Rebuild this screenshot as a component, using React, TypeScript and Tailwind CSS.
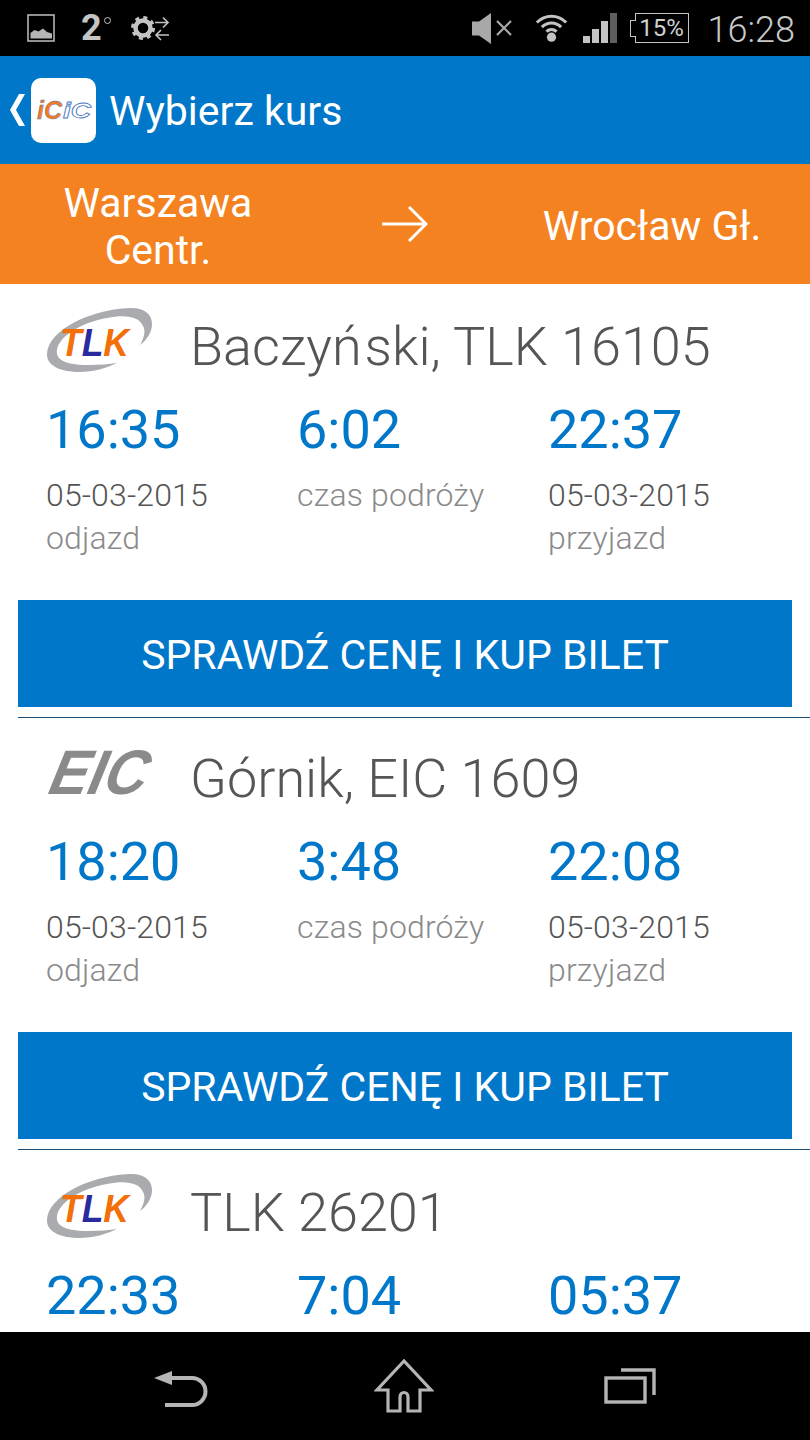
import React from "react";

const StatusLeft = () => (
  <div className="flex items-center">
    <svg width="30" height="30" viewBox="0 0 30 30" className="ml-[26px]">
      <rect x="2" y="2" width="26" height="26" fill="none" stroke="#b5b5b5" strokeWidth="1.6" />
      <path d="M4.500 25.500V20l4-3 4 1.500 4.500-3 4 3.500 5 1.500v5z" fill="#b5b5b5" />
    </svg>
    <span className="ml-[25px] text-[36px] leading-none font-bold text-[#c4c4c4]">2</span>
    <span className="mb-[16px] ml-[2px] h-[7px] w-[7px] rounded-full border border-[#c4c4c4]" />
    <svg width="40" height="30" viewBox="0 0 40 30" className="ml-[20px]">
      <g fill="none" stroke="#c4c4c4">
        <circle cx="12" cy="15" r="7.500" strokeWidth="4.500" />
        <circle cx="12" cy="15" r="10.500" strokeWidth="3" strokeDasharray="4 4.250" />
        <path d="M24 9.500h13M32 4.500l5 5-5 5M38 22H25M30 17l-5 5 5 5" strokeWidth="1.600" />
      </g>
    </svg>
  </div>
);

const StatusRight = () => (
  <div className="flex items-center">
    <svg width="40" height="31" viewBox="0 0 40 31">
      <path d="M0 8.500h7L19 0v31L7 22.500H0z" fill="#a8a8a8" />
      <path d="M25 8l14 14M39 8L25 22" stroke="#a8a8a8" strokeWidth="2.200" />
    </svg>
    <svg width="33" height="30" viewBox="0 0 36 32" className="ml-[23px]">
      <g fill="none" stroke="#c4c4c4" strokeWidth="3.400">
        <path d="M2 10c9-9 23-9 32 0" />
        <path d="M7.500 15c6-6 15-6 21 0" />
        <path d="M12.500 20c3.200-3 7.800-3 11 0" />
      </g>
      <circle cx="18" cy="26" r="5" fill="#c4c4c4" />
    </svg>
    <svg width="34" height="30" viewBox="0 0 34 30" className="ml-[15px]">
      <rect x="0" y="23" width="7" height="7" fill="#c4c4c4" />
      <rect x="9" y="16" width="7" height="14" fill="#c4c4c4" />
      <rect x="18" y="8" width="7" height="22" fill="#c4c4c4" />
      <rect x="27" y="0" width="7" height="30" fill="#5e5e5e" />
    </svg>
    <div className="relative ml-[18px] flex h-[30px] w-[54px] items-center justify-center border border-[#c4c4c4] text-[24px] leading-none text-[#d0d0d0]">
      15%
      <span className="absolute top-[6px] left-[-6px] h-[17px] w-[6px] border-y border-l border-[#c4c4c4] bg-black" />
    </div>
    <span className="mt-[3px] mr-[15px] ml-[19px] text-[36px] leading-none font-light text-[#c8c8c8]">16:28</span>
  </div>
);

const TlkLogo = () => (
  <svg width="108" height="66" viewBox="0 0 108 66" className="mb-[6px] block">
    <path d="M0 46C2 24 40 3 83 1c15-.5 22 7 22 16 0 7-4 15-12 21 4-7 6-14 3-19C92 10 80 7 60 11 32 16 12 30 10 43c-2 12 14 15 32 15 11 0 20-1 28-2-10 5-24 9-37 9C12 65-1 58 0 46z" fill="#a9abae" />
    <text x="13" y="49" fontFamily="'Liberation Sans', sans-serif" fontStyle="italic" fontWeight="700" fontSize="38" textLength="69" lengthAdjust="spacingAndGlyphs">
      <tspan fill="#f26f0a">T</tspan>
      <tspan fill="#2a2aa0">L</tspan>
      <tspan fill="#f26f0a">K</tspan>
    </text>
  </svg>
);

const EicLogo = () => (
  <svg width="108" height="50" viewBox="0 0 108 50" className="mb-[13px] block overflow-visible">
    <g transform="translate(-3 46) skewX(-22)">
      <text x="0" y="0" fill="#8a8a8a" fontFamily="'Liberation Sans', sans-serif" fontWeight="700" fontSize="63" textLength="97" lengthAdjust="spacingAndGlyphs">EIC</text>
    </g>
  </svg>
);

const Cell = ({ time, top, bottom, short }: { time: string; top?: string; bottom: string; short?: boolean }) => (
  <div>
    <div className="text-[54px] leading-[64px] text-[#0077c8]">{time}</div>
    {!short && (
      <div className="mt-[12px] h-[86px] tracking-[0.15px]">
        {top && <div className="text-[32px] leading-[43px] font-[350] text-[#555555]">{top}</div>}
        <div className="text-[32px] leading-[43px] font-[350] text-[#8a8a8a]">{bottom}</div>
      </div>
    )}
  </div>
);

const Card = ({
  logo,
  title,
  dep,
  dur,
  arr,
  last,
}: {
  logo: React.ReactNode;
  title: React.ReactNode;
  dep: string;
  dur: string;
  arr: string;
  last?: boolean;
}) => (
  <section className={last ? "mt-[2px]" : ""}>
    <div className="flex h-[114px] items-end pb-[19px] pl-[47px]">
      <div className="w-[143px]">{logo}</div>
      <h2 className="text-[54px] leading-[64px] font-light whitespace-nowrap text-[#555555]">{title}</h2>
    </div>
    <div className="grid grid-cols-[251px_251px_1fr] pl-[46px]">
      <Cell time={dep} top="05-03-2015" bottom="odjazd" short={last} />
      <Cell time={dur} bottom="czas podróży" short={last} />
      <Cell time={arr} top="05-03-2015" bottom="przyjazd" short={last} />
    </div>
    {!last && (
      <>
        <div className="mx-[18px] mt-[40px] flex h-[107px] items-center justify-center bg-[#0077c8] pt-[4px] text-[41px] text-white">
          SPRAWDŹ CENĘ I KUP BILET
        </div>
        <div className="mt-[10px] mb-[-2px] ml-[18px] h-[1px] bg-[#1d4f7a]" />
      </>
    )}
  </section>
);

export default function App() {
  return (
    <div className="flex h-[1440px] w-[810px] flex-col overflow-hidden bg-white font-['Roboto',sans-serif]">
      <header className="flex h-[56px] shrink-0 items-center justify-between bg-black">
        <StatusLeft />
        <StatusRight />
      </header>
      <div className="flex h-[108px] shrink-0 items-center bg-[#0077c8] text-white">
        <svg width="18" height="32" viewBox="0 0 18 32" className="ml-[8px]">
          <path d="M11 0h6L8 16l9 16h-6L2 16z" fill="#ffffff" />
        </svg>
        <div className="ml-[5px] flex h-[65px] w-[65px] items-center justify-center rounded-[10px] bg-white">
          <svg width="58" height="26" viewBox="0 0 58 26">
            <text x="2" y="22" fill="#f47b20" stroke="#4a78b8" strokeWidth="0.4" fontFamily="'Liberation Sans', sans-serif" fontStyle="italic" fontWeight="700" fontSize="25">iC</text>
            <text x="28" y="21" fill="none" stroke="#4a78b8" strokeWidth="0.8" fontFamily="'Liberation Sans', sans-serif" fontStyle="italic" fontWeight="700" fontSize="22" textLength="28" lengthAdjust="spacingAndGlyphs">iC</text>
          </svg>
        </div>
        <span className="mt-[3px] ml-[13px] text-[41px] leading-none">Wybierz kurs</span>
      </div>
      <div className="grid h-[120px] shrink-0 grid-cols-[316px_178px_1fr] items-center bg-[#f58220] pt-[5px] text-center text-[41px] leading-[47px] text-white">
        <div>
          Warszawa
          <br />
          Centr.
        </div>
        <svg width="46" height="36" viewBox="0 0 46 36" className="mb-[5px] justify-self-center">
          <path d="M0 18h44M27 1l17 17-17 17" fill="none" stroke="#ffffff" strokeWidth="3" />
        </svg>
        <div>Wrocław Gł.</div>
      </div>
      <main className="min-h-0 flex-1 overflow-hidden">
        <Card
          logo={<TlkLogo />}
          title={
            <>
              Baczy<span className="pr-[3px]">ń</span>ski, TLK 16105
            </>
          }
          dep="16:35"
          dur="6:02"
          arr="22:37"
        />
        <Card logo={<EicLogo />} title="Górnik, EIC 1609" dep="18:20" dur="3:48" arr="22:08" />
        <Card logo={<TlkLogo />} title="TLK 26201" dep="22:33" dur="7:04" arr="05:37" last />
      </main>
      <nav className="flex h-[108px] shrink-0 items-center bg-black pl-[152px]">
        <svg width="56" height="44" viewBox="0 0 56 44" className="mt-[4px]">
          <path d="M2 12L20 5v14z" fill="#b5b5b5" />
          <path d="M18 12h22a13.500 13.500 0 0 1 0 27H13" fill="none" stroke="#b5b5b5" strokeWidth="4" />
        </svg>
        <svg width="60" height="54" viewBox="0 0 60 54" className="ml-[166px]">
          <path d="M30 2L3 31h11v21h12V38c0-6 8-6 8 0v14h12V31h11z" fill="none" stroke="#b5b5b5" strokeWidth="3.200" />
        </svg>
        <svg width="52" height="38" viewBox="0 0 52 38" className="ml-[170px]">
          <path d="M17 3h33v25" fill="none" stroke="#b5b5b5" strokeWidth="3.400" />
          <rect x="2" y="11" width="39" height="24" fill="none" stroke="#b5b5b5" strokeWidth="3.400" />
        </svg>
      </nav>
    </div>
  );
}
